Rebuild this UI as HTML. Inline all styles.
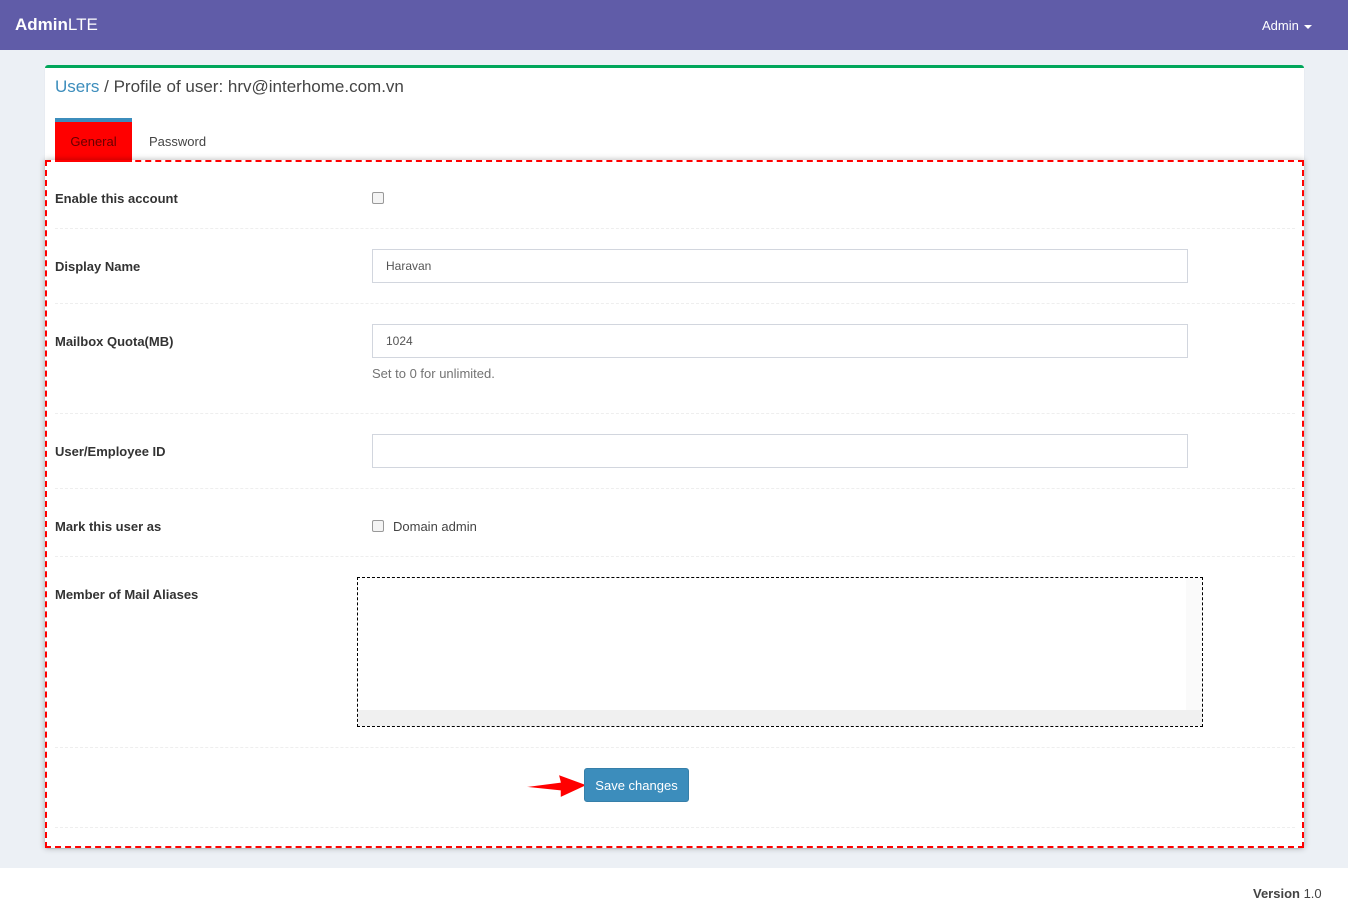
<!DOCTYPE html>
<html><head><meta charset="utf-8"><style>
*{box-sizing:border-box;margin:0;padding:0}
body{width:1348px;height:918px;background:#ecf0f5;font-family:"Liberation Sans",sans-serif;font-size:13px;color:#333;position:relative;overflow:hidden}
.hdr{position:absolute;left:0;top:0;width:1348px;height:50px;background:#605ca8;color:#fff}
.logo{position:absolute;left:15px;top:15px;font-size:17px}
.adm{position:absolute;left:1262px;top:18px;font-size:13px}
.caret{display:inline-block;border-left:4px solid transparent;border-right:4px solid transparent;border-top:4px solid #fff;margin-left:5px;vertical-align:middle}
.box{position:absolute;left:45px;top:65px;width:1259px;height:783px;background:#fff;border-top:3px solid #00a65a;border-radius:3px;box-shadow:0 1px 1px rgba(0,0,0,.1)}
.title{position:absolute;left:55px;top:77px;font-size:17px;color:#444}
.title a{color:#3c8dbc}
.tab1{position:absolute;left:55px;top:118px;width:77px;height:44px;background:#f00;border-top:4px solid #3c8dbc;color:#600;text-align:center;padding-top:12px}
.tab2{position:absolute;left:149px;top:134px;color:#444}
.dash{position:absolute;left:45px;top:160px;width:1259px;height:688px;border:2px dashed #f00;box-shadow:0 0 6px rgba(0,0,0,.3)}
.lbl{position:absolute;left:55px;font-weight:bold;color:#333}
.hr{position:absolute;left:55px;width:1240px;border-top:1px dashed #eee}
.inp{position:absolute;left:372px;width:816px;height:34px;border:1px solid #d2d6de;padding:9px 13px;font-size:12px;color:#555}
.cb{position:absolute;left:372px;width:12px;height:12px;border:1px solid #999;border-radius:2px;background:#f4f4f4}
.ta{position:absolute;left:357px;top:577px;width:846px;height:150px;border:1px dashed #000}
.sb{position:absolute;left:0;bottom:0;width:844px;height:16px;background:#f0f0f0}
.vs{position:absolute;right:0;top:0;width:16px;height:132px;background:#fafafa}
.btn{position:absolute;left:584px;top:768px;width:105px;height:34px;background:#3c8dbc;border:1px solid #367fa9;border-radius:3px;color:#fff;text-align:center;padding-top:9px;font-size:13px}
.foot{position:absolute;left:0;top:868px;width:1348px;height:50px;background:#fff}
</style></head><body>
<div class="hdr"><div class="logo"><b>Admin</b>LTE</div><div class="adm">Admin<span class="caret"></span></div></div>
<div class="box"></div>
<div class="title"><a>Users</a> / Profile of user: hrv@interhome.com.vn</div>
<div class="tab1">General</div><div class="tab2">Password</div>
<div class="dash"></div>
<div class="lbl" style="top:191px">Enable this account</div><div class="cb" style="top:192px"></div>
<div class="hr" style="top:228px"></div>
<div class="lbl" style="top:259px">Display Name</div><div class="inp" style="top:249px">Haravan</div>
<div class="hr" style="top:303px"></div>
<div class="lbl" style="top:334px">Mailbox Quota(MB)</div><div class="inp" style="top:324px">1024</div>
<div style="position:absolute;left:372px;top:366px;color:#737373">Set to 0 for unlimited.</div>
<div class="hr" style="top:413px"></div>
<div class="lbl" style="top:444px">User/Employee ID</div><div class="inp" style="top:434px"></div>
<div class="hr" style="top:488px"></div>
<div class="lbl" style="top:519px">Mark this user as</div><div class="cb" style="top:520px"></div><div style="position:absolute;left:393px;top:519px;color:#444">Domain admin</div>
<div class="hr" style="top:556px"></div>
<div class="lbl" style="top:587px">Member of Mail Aliases</div>
<div class="ta"><div class="vs"></div><div class="sb"></div></div>
<div class="hr" style="top:747px"></div>
<svg style="position:absolute;left:518px;top:770px" width="72" height="32"><path d="M3 17 L42 12 L40 4 L70 15 L42 28 L42 21 Z" fill="#f00" stroke="#fff" stroke-width="1.5"/></svg>
<div class="btn">Save changes</div>
<div class="hr" style="top:827px"></div>
<div class="foot"><div style="position:absolute;left:1253px;top:18px;color:#444"><b>Version</b> 1.0</div></div>
</body></html>
